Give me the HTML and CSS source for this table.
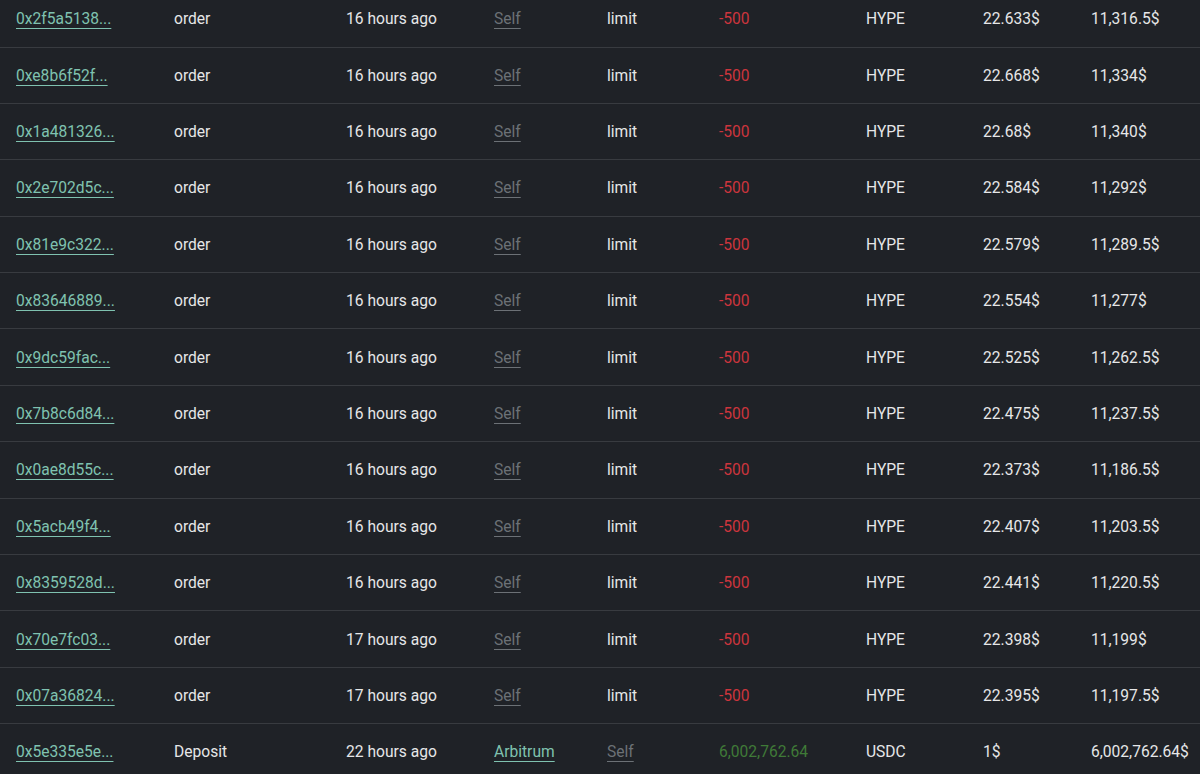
FILE: index.html
```html
<!DOCTYPE html>
<html>
<head>
<meta charset="utf-8">
<link rel="stylesheet" href="styles.css">
</head>
<body>
<table class="tx">
<colgroup>
<col class="c1"><col class="c2"><col class="c3"><col class="c4"><col class="c5"><col class="c6"><col class="c7"><col class="c8"><col class="c9">
</colgroup>
<tbody>
<tr><td><a class="hash" href="#">0x2f5a5138...</a></td><td>order</td><td>16 hours ago</td><td><a class="self" href="#">Self</a></td><td>limit</td><td class="neg">-500</td><td>HYPE</td><td>22.633$</td><td>11,316.5$</td></tr>
<tr><td><a class="hash" href="#">0xe8b6f52f...</a></td><td>order</td><td>16 hours ago</td><td><a class="self" href="#">Self</a></td><td>limit</td><td class="neg">-500</td><td>HYPE</td><td>22.668$</td><td>11,334$</td></tr>
<tr><td><a class="hash" href="#">0x1a481326...</a></td><td>order</td><td>16 hours ago</td><td><a class="self" href="#">Self</a></td><td>limit</td><td class="neg">-500</td><td>HYPE</td><td>22.68$</td><td>11,340$</td></tr>
<tr><td><a class="hash" href="#">0x2e702d5c...</a></td><td>order</td><td>16 hours ago</td><td><a class="self" href="#">Self</a></td><td>limit</td><td class="neg">-500</td><td>HYPE</td><td>22.584$</td><td>11,292$</td></tr>
<tr><td><a class="hash" href="#">0x81e9c322...</a></td><td>order</td><td>16 hours ago</td><td><a class="self" href="#">Self</a></td><td>limit</td><td class="neg">-500</td><td>HYPE</td><td>22.579$</td><td>11,289.5$</td></tr>
<tr><td><a class="hash" href="#">0x83646889...</a></td><td>order</td><td>16 hours ago</td><td><a class="self" href="#">Self</a></td><td>limit</td><td class="neg">-500</td><td>HYPE</td><td>22.554$</td><td>11,277$</td></tr>
<tr><td><a class="hash" href="#">0x9dc59fac...</a></td><td>order</td><td>16 hours ago</td><td><a class="self" href="#">Self</a></td><td>limit</td><td class="neg">-500</td><td>HYPE</td><td>22.525$</td><td>11,262.5$</td></tr>
<tr><td><a class="hash" href="#">0x7b8c6d84...</a></td><td>order</td><td>16 hours ago</td><td><a class="self" href="#">Self</a></td><td>limit</td><td class="neg">-500</td><td>HYPE</td><td>22.475$</td><td>11,237.5$</td></tr>
<tr><td><a class="hash" href="#">0x0ae8d55c...</a></td><td>order</td><td>16 hours ago</td><td><a class="self" href="#">Self</a></td><td>limit</td><td class="neg">-500</td><td>HYPE</td><td>22.373$</td><td>11,186.5$</td></tr>
<tr><td><a class="hash" href="#">0x5acb49f4...</a></td><td>order</td><td>16 hours ago</td><td><a class="self" href="#">Self</a></td><td>limit</td><td class="neg">-500</td><td>HYPE</td><td>22.407$</td><td>11,203.5$</td></tr>
<tr><td><a class="hash" href="#">0x8359528d...</a></td><td>order</td><td>16 hours ago</td><td><a class="self" href="#">Self</a></td><td>limit</td><td class="neg">-500</td><td>HYPE</td><td>22.441$</td><td>11,220.5$</td></tr>
<tr><td><a class="hash" href="#">0x70e7fc03...</a></td><td>order</td><td>17 hours ago</td><td><a class="self" href="#">Self</a></td><td>limit</td><td class="neg">-500</td><td>HYPE</td><td>22.398$</td><td>11,199$</td></tr>
<tr><td><a class="hash" href="#">0x07a36824...</a></td><td>order</td><td>17 hours ago</td><td><a class="self" href="#">Self</a></td><td>limit</td><td class="neg">-500</td><td>HYPE</td><td>22.395$</td><td>11,197.5$</td></tr>
<tr><td><a class="hash" href="#">0x5e335e5e...</a></td><td>Deposit</td><td>22 hours ago</td><td><a class="hash" href="#">Arbitrum</a></td><td><a class="self" href="#">Self</a></td><td class="pos">6,002,762.64</td><td>USDC</td><td>1$</td><td>6,002,762.64$</td></tr>
</tbody>
</table>
</body>
</html>
```

FILE: styles.css
```css
html, body {
  margin: 0;
  padding: 0;
  background: #1f2227;
  overflow: hidden;
}
body {
  font-family: Roboto, "Liberation Sans", sans-serif;
  font-size: 15.6px;
  color: #e6e7e8;
}
.tx {
  width: 1200px;
  table-layout: fixed;
  border-collapse: collapse;
  margin-top: -9.4px;
}
.c1 { width: 158px; }
.c2 { width: 172px; }
.c3 { width: 148px; }
.c4 { width: 113px; }
.c5 { width: 112px; }
.c6 { width: 147px; }
.c7 { width: 117px; }
.c8 { width: 108px; }
.c9 { width: 125px; }
.tx tr {
  height: 56.4px;
  border-bottom: 1px solid #383b40;
}
.tx td {
  padding: 1px 0 0 16px;
  white-space: nowrap;
  vertical-align: middle;
  line-height: 20px;
}
.hash {
  color: #7fc2b0;
  text-decoration: underline;
  text-underline-offset: 3.5px;
}
.self {
  color: #6c7176;
  text-decoration: underline;
  text-underline-offset: 3.5px;
}
.neg { color: #cc353d; }
.pos { color: #3f7a37; }
```
